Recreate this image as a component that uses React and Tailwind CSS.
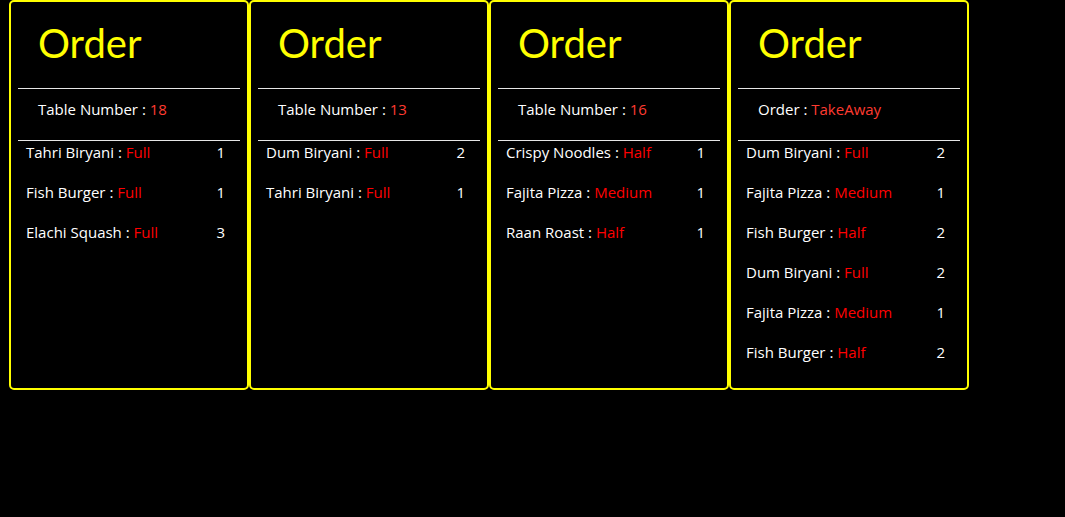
const orders = [
  {
    label: "Table Number",
    value: "18",
    items: [
      { name: "Tahri Biryani", size: "Full", qty: 1 },
      { name: "Fish Burger", size: "Full", qty: 1 },
      { name: "Elachi Squash", size: "Full", qty: 3 },
    ],
  },
  {
    label: "Table Number",
    value: "13",
    items: [
      { name: "Dum Biryani", size: "Full", qty: 2 },
      { name: "Tahri Biryani", size: "Full", qty: 1 },
    ],
  },
  {
    label: "Table Number",
    value: "16",
    items: [
      { name: "Crispy Noodles", size: "Half", qty: 1 },
      { name: "Fajita Pizza", size: "Medium", qty: 1 },
      { name: "Raan Roast", size: "Half", qty: 1 },
    ],
  },
  {
    label: "Order",
    value: "TakeAway",
    items: [
      { name: "Dum Biryani", size: "Full", qty: 2 },
      { name: "Fajita Pizza", size: "Medium", qty: 1 },
      { name: "Fish Burger", size: "Half", qty: 2 },
      { name: "Dum Biryani", size: "Full", qty: 2 },
      { name: "Fajita Pizza", size: "Medium", qty: 1 },
      { name: "Fish Burger", size: "Half", qty: 2 },
    ],
  },
];

const OrderCard = ({ order }) => (
  <div className="w-[240px] h-[390px] border-2 border-[#ffff00] rounded-[5px] px-[7px]">
    <h1 className="h-[87px] border-b border-[#e6e6e6] pl-[20px] pt-[16px] text-[40px] leading-[50px] text-[#ffff00] font-['Lato',sans-serif]">
      Order
    </h1>
    <div className="h-[52px] border-b border-[#e6e6e6] pl-[20px] pb-[10px] flex items-center text-[15px] text-white">
      <span>
        {order.label} : <span className="text-[#ff3b30]">{order.value}</span>
      </span>
    </div>
    <ul className="pl-[8px] pr-[15px]">
      {order.items.map((item, i) => (
        <li key={i} className="h-[40px] flex justify-between items-start text-[15px] leading-[22px] text-white">
          <span>
            {item.name} : <span className="text-[#ff0000]">{item.size}</span>
          </span>
          <span>{item.qty}</span>
        </li>
      ))}
    </ul>
  </div>
);

export default function App() {
  return (
    <div className="min-h-[517px] bg-black pl-[9px] flex items-start font-['Open_Sans',sans-serif]">
      {orders.map((order, i) => (
        <OrderCard key={i} order={order} />
      ))}
    </div>
  );
}
